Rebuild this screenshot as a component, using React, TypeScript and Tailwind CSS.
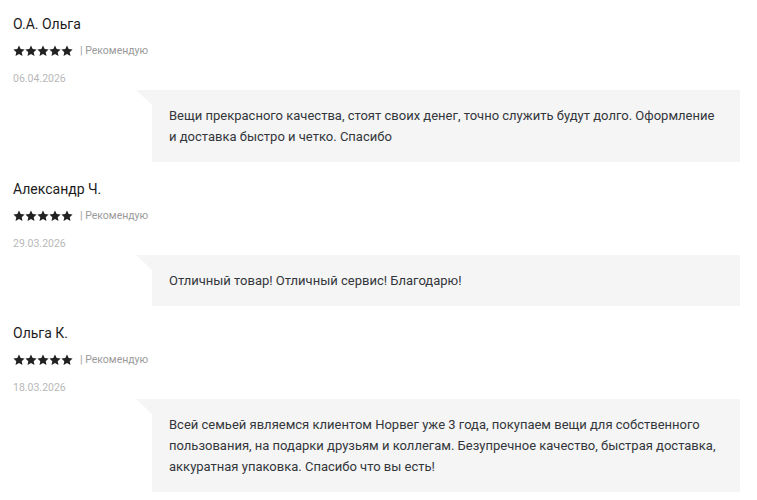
// Review list: author, rating, date and a speech bubble with the text
const reviews = [
    {
        id: 1,
        author: "О.А. Ольга",
        date: "06.04.2026",
        text: "Вещи прекрасного качества, стоят своих денег, точно служить будут долго. Оформление и доставка быстро и четко. Спасибо",
    },
    {
        id: 2,
        author: "Александр Ч.",
        date: "29.03.2026",
        text: "Отличный товар! Отличный сервис! Благодарю!",
    },
    {
        id: 3,
        author: "Ольга К.",
        date: "18.03.2026",
        text: "Всей семьей являемся клиентом Норвег уже 3 года, покупаем вещи для собственного пользования, на подарки друзьям и коллегам. Безупречное качество, быстрая доставка, аккуратная упаковка. Спасибо что вы есть!",
    },
]

function Star() {
    return (
        <svg width="12" height="12" viewBox="0 0 24 24" className="fill-[#222]">
            <path d="M12 1l3.4 7.1 7.8.9-5.8 5.3 1.6 7.7L12 18.1l-7 3.9 1.6-7.7L.8 9l7.8-.9z" />
        </svg>
    )
}

export default function App() {
    return (
        <div className="w-[757px] h-[500px] overflow-hidden bg-white pt-[14px] pl-[13px] pr-[17px] font-['Roboto',sans-serif]">
            {reviews.map((review) => (
                <div key={review.id} className="mb-[17px]">

                    {/* AUTHOR */}
                    <div className="text-[14px] leading-[20px] font-normal text-[#1c1c1c]">{review.author}</div>

                    {/* RATING */}
                    <div className="mt-[11px] flex items-center h-[12px]">
                        <div className="flex">
                            {[0, 1, 2, 3, 4].map((i) => <Star key={i} />)}
                        </div>
                        <span className="ml-[7px] text-[10.5px] leading-[12px] text-[#9a9a9a]">| Рекомендую</span>
                    </div>

                    {/* DATE */}
                    <div className="mt-[15px] text-[10.5px] leading-[14px] text-[#b8b8b8]">{review.date}</div>

                    {/* BUBBLE */}
                    <div className="relative mt-[4px] ml-[139px] bg-[#f5f5f5] px-[17px] py-[15px] text-[13px] leading-[21px] text-[#33363b]">
                        <span className="absolute -left-[16px] top-0 w-0 h-0 border-t-[15px] border-t-[#f5f5f5] border-l-[16px] border-l-transparent" />
                        {review.text}
                    </div>
                </div>
            ))}
        </div>
    )
}
